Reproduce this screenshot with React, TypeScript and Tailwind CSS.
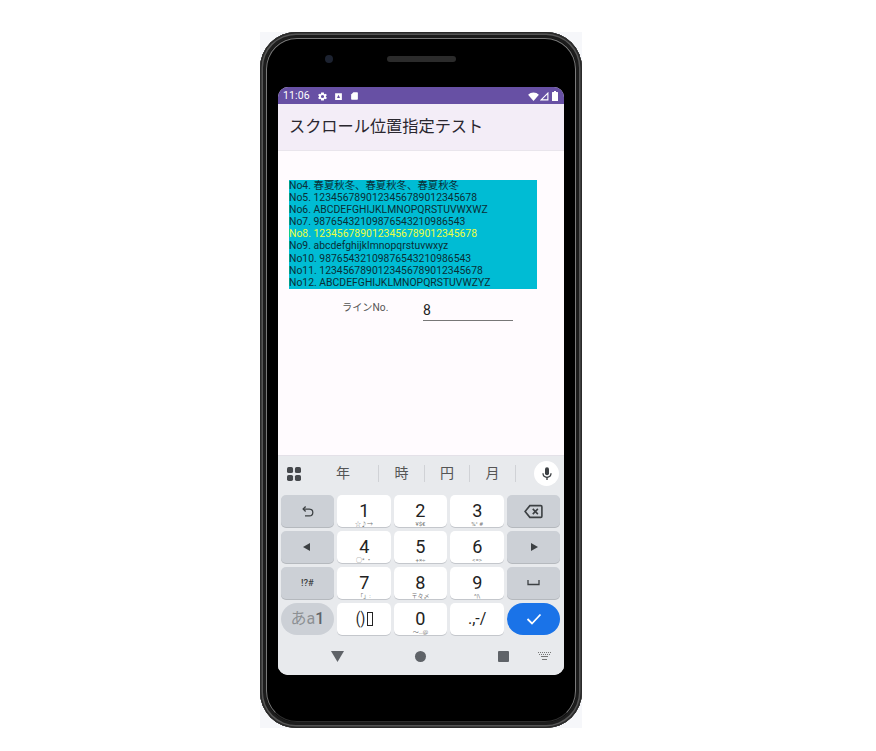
import React from "react";

const lines = [
  "No4. 春夏秋冬、春夏秋冬、春夏秋冬",
  "No5. 1234567890123456789012345678",
  "No6. ABCDEFGHIJKLMNOPQRSTUVWXWZ",
  "No7. 98765432109876543210986543",
  "No8. 1234567890123456789012345678",
  "No9. abcdefghijklmnopqrstuvwxyz",
  "No10. 98765432109876543210986543",
  "No11. 1234567890123456789012345678",
  "No12. ABCDEFGHIJKLMNOPQRSTUVWZYZ",
];

function NumKey({ n, sub }: { n: string; sub: string }) {
  return (
    <div className="relative flex h-[32px] flex-col items-center rounded-[5px] bg-white shadow-[0_1px_0_#c4c7cc]">
      <span className="mt-[8px] scale-x-[0.95] text-[19px] leading-[16px] text-[#222]">{n}</span>
      <span className="absolute bottom-[0.5px] text-[6px] leading-[7px] text-[#777]">{sub}</span>
    </div>
  );
}

function GrayKey({ children }: { children: React.ReactNode }) {
  return (
    <div className="flex h-[32px] items-center justify-center rounded-[5px] bg-[#ccd0d6] text-[#3c4043] shadow-[0_1px_0_#b5b9be]">
      {children}
    </div>
  );
}

export default function App() {
  return (
    <div className="h-[751px] w-[876px] overflow-hidden bg-white pl-[260px] pt-[32px] font-['Roboto','Noto_Sans_CJK_JP',sans-serif]">
      <div className="h-[696px] w-[322px] bg-[#f6f7fa]">
        <div className="relative h-[696px] w-[322px] rounded-[36px] bg-black px-[18px] pt-[55px] shadow-[inset_0_0_0_1.5px_#2a2a2a,inset_0_0_0_3px_#555,inset_0_0_0_6px_#1c1c1c]">
          <div className="absolute inset-[6px] rounded-[31px] border-[1.5px] border-[#7a7a7a] border-b-[#2e2e2e]" />
          <div className="absolute left-[65px] top-[23px] h-[8px] w-[8px] rounded-full bg-[#1c2230]" />
          <div className="absolute left-[127px] top-[24px] h-[6px] w-[69px] rounded-full bg-[#2b2b2b]" />

          <div className="relative flex h-[588px] w-[286px] flex-col overflow-hidden rounded-[10px] bg-[#fffbfe]">
            {/* status bar */}
            <div className="flex h-[17px] items-center bg-[#6750a4] pl-[5px] pr-[6px] pt-[1px] text-white">
              <span className="text-[10.5px] leading-none tracking-[0.1px]">11:06</span>
              <svg className="ml-[7px]" width="11" height="11" viewBox="0 0 24 24" fill="white">
                <path d="M19.4 13a7.6 7.6 0 0 0 0-2l2.1-1.6-2-3.5-2.5 1a7.4 7.4 0 0 0-1.7-1L15 3.200h-6l-.4 2.700a7.400 7.400 0 0 0-1.700 1l-2.500-1-2 3.500L4.500 11a7.600 7.600 0 0 0 0 2l-2.100 1.600 2 3.500 2.500-1a7.400 7.400 0 0 0 1.700 1l.4 2.700h6l.4-2.700a7.400 7.400 0 0 0 1.700-1l2.500 1 2-3.500zM12 15.500a3.500 3.500 0 1 1 0-7 3.500 3.500 0 0 1 0 7z" />
              </svg>
              <svg className="ml-[6px]" width="9" height="9" viewBox="0 0 24 24" fill="white">
                <path fillRule="evenodd" d="M3 3h18v18H3zM12 7l-4 9h8z" />
              </svg>
              <svg className="ml-[7px]" width="9" height="10" viewBox="0 0 24 24" fill="white">
                <path d="M9 2h10a2 2 0 0 1 2 2v16a2 2 0 0 1-2 2H5a2 2 0 0 1-2-2V8z" />
              </svg>
              <div className="flex-1" />
              <svg width="11" height="9" viewBox="0 0 24 20" fill="white">
                <path d="M0 6a17 17 0 0 1 24 0L12 20z" />
              </svg>
              <svg className="ml-[1px]" width="9" height="9" viewBox="0 0 24 24" fill="none" stroke="white" strokeWidth="3">
                <path d="M21 3v18H3z" />
              </svg>
              <svg className="ml-[3px]" width="6" height="10" viewBox="0 0 12 20" fill="white">
                <path d="M4 0h4v2h3a1 1 0 0 1 1 1v16a1 1 0 0 1-1 1H1a1 1 0 0 1-1-1V3a1 1 0 0 1 1-1h3z" />
              </svg>
            </div>

            {/* app bar */}
            <div className="flex h-[47px] items-center border-b border-[#e9e5ec] bg-[#f3edf7] pl-[11px] pt-[1px]">
              <span className="text-[16.2px] leading-none text-[#2a272f]">スクロール位置指定テスト</span>
            </div>

            {/* content */}
            <div className="flex-1 pl-[11px] pt-[29px]">
              <div className="h-[109px] w-[248px] overflow-hidden bg-[#00bcd4]">
                {lines.map((l, i) => (
                  <div
                    key={l}
                    className={`h-[12.1px] whitespace-nowrap text-[10.4px] leading-[12.1px] ${i === 4 ? "text-[#eeff41]" : "text-[#0a2f36]"}`}
                  >
                    {l}
                  </div>
                ))}
              </div>
              <div className="mt-[9px] flex items-start">
                <span className="ml-[53px] w-[81px] text-[10.2px] leading-[20px] text-[#555]">ラインNo.</span>
                <div className="h-[23px] w-[90px] border-b-[1.5px] border-[#777] pt-[3px] text-[14px] leading-[18px] text-[#222]">8</div>
              </div>
            </div>

            {/* keyboard */}
            <div className="h-[219px] bg-[#e8eaed] shadow-[0_-1px_0_#e4e1e8]">
              {/* candidates */}
              <div className="flex h-[39px] items-center pb-[4px] text-[14px] text-[#555]">
                <svg className="ml-[9px]" width="14" height="14" viewBox="0 0 15 15" fill="#46494d">
                  <rect x="0" y="0" width="6.500" height="6.500" rx="1.800" />
                  <rect x="8.500" y="0" width="6.500" height="6.500" rx="1.800" />
                  <rect x="0" y="8.500" width="6.500" height="6.500" rx="1.800" />
                  <rect x="8.500" y="8.500" width="6.500" height="6.500" rx="1.800" />
                </svg>
                <span className="ml-[7px] w-[70px] text-center">年</span>
                <span className="h-[17px] w-px bg-[#d0d2d6]" />
                <span className="w-[45px] text-center">時</span>
                <span className="h-[17px] w-px bg-[#d0d2d6]" />
                <span className="w-[44px] text-center">円</span>
                <span className="h-[17px] w-px bg-[#d0d2d6]" />
                <span className="w-[45px] text-center">月</span>
                <span className="h-[17px] w-px bg-[#d0d2d6]" />
                <div className="ml-[18px] flex h-[25px] w-[25px] items-center justify-center rounded-full bg-white">
                  <svg width="16" height="18" viewBox="0 0 24 24" fill="#3c4043">
                    <path d="M12 14a3 3 0 0 0 3-3V5a3 3 0 0 0-6 0v6a3 3 0 0 0 3 3z" />
                    <path d="M17 11a5 5 0 0 1-10 0H5a7 7 0 0 0 6 6.900V21h2v-3.100A7 7 0 0 0 19 11z" />
                  </svg>
                </div>
              </div>

              {/* keys */}
              <div className="grid grid-cols-5 gap-x-[3.3px] gap-y-[4px] pl-[2.8px] pr-[3.7px]">
                <GrayKey>
                  <svg width="15" height="15" viewBox="0 0 24 24" fill="none" stroke="#3c4043" strokeWidth="2">
                    <path d="M9 4 5 8l4 4" />
                    <path d="M5 8h10a5 5 0 0 1 0 11H8" />
                  </svg>
                </GrayKey>
                <NumKey n="1" sub="☆♪→" />
                <NumKey n="2" sub="¥$€" />
                <NumKey n="3" sub="%° #" />
                <GrayKey>
                  <svg width="19" height="15" viewBox="0 0 26 20" fill="none" stroke="#3c4043" strokeWidth="2.200">
                    <path d="M8 2h15a1.500 1.500 0 0 1 1.500 1.500v13A1.500 1.500 0 0 1 23 18H8l-6.500-8z" />
                    <path d="m12 6.500 7 7m0-7-7 7" />
                  </svg>
                </GrayKey>

                <GrayKey>
                  <svg width="8" height="8" viewBox="0 0 8 8" fill="#3c4043"><path d="M7 0v8L0 4z" /></svg>
                </GrayKey>
                <NumKey n="4" sub="○* ・" />
                <NumKey n="5" sub="+×÷" />
                <NumKey n="6" sub="<=>" />
                <GrayKey>
                  <svg width="8" height="8" viewBox="0 0 8 8" fill="#3c4043"><path d="M1 0v8l7-4z" /></svg>
                </GrayKey>

                <GrayKey><span className="text-[9.500px] font-medium">!?#</span></GrayKey>
                <NumKey n="7" sub="「」:" />
                <NumKey n="8" sub="〒々〆" />
                <NumKey n="9" sub="^|\" />
                <GrayKey>
                  <svg width="13" height="6" viewBox="0 0 13 6" fill="none" stroke="#3c4043" strokeWidth="1.300"><path d="M1 0v4.500h11V0" /></svg>
                </GrayKey>

                <div className="flex h-[32px] items-center justify-center rounded-full bg-[#ccd0d6] text-[16px] leading-none">
                  <span className="text-[#8d9094]">あ</span>
                  <span className="text-[#8d9094]">a</span>
                  <span className="font-medium text-[#5f6368]">1</span>
                </div>
                <div className="flex h-[32px] items-center justify-center rounded-[5px] bg-white text-[16px] text-[#222] shadow-[0_1px_0_#c4c7cc]">
                  <span className="scale-x-[0.85]">()</span>
                  <span className="h-[14px] w-[6px] border border-[#222]" />
                </div>
                <NumKey n="0" sub="〜…@" />
                <div className="flex h-[32px] items-center justify-center rounded-[5px] bg-white text-[16px] text-[#222] shadow-[0_1px_0_#c4c7cc]">.,-/</div>
                <div className="flex h-[32px] items-center justify-center rounded-full bg-[#1a73e8]">
                  <svg width="16" height="12" viewBox="0 0 16 12" fill="none" stroke="white" strokeWidth="1.800"><path d="m1.500 6 4.500 4.500 8.500-9" /></svg>
                </div>
              </div>

              {/* nav */}
              <div className="mt-[9px] flex h-[24px] items-center">
                <svg className="ml-[53px]" width="13" height="11" viewBox="0 0 13 11" fill="#5f6368"><path d="M0 0h13L6.500 11z" /></svg>
                <div className="ml-[71px] h-[11px] w-[11px] rounded-full bg-[#5f6368]" />
                <div className="ml-[72px] h-[11px] w-[11px] rounded-[1px] bg-[#5f6368]" />
                <svg className="ml-[29px]" width="13" height="9" viewBox="0 0 13 9" fill="#777">
                  <path d="M0 0h1v1H0zM2 0h1v1H2zM4 0h1v1H4zM6 0h1v1H6zM8 0h1v1H8zM10 0h1v1h-1zM12 0h1v1h-1zM1 2h1v1H1zM3 2h1v1H3zM5 2h1v1H5zM7 2h1v1H7zM9 2h1v1H9zM11 2h1v1h-1zM3 4h7v1H3zM4 7h5v1H4z" />
                </svg>
              </div>
            </div>
          </div>
        </div>
      </div>
    </div>
  );
}
